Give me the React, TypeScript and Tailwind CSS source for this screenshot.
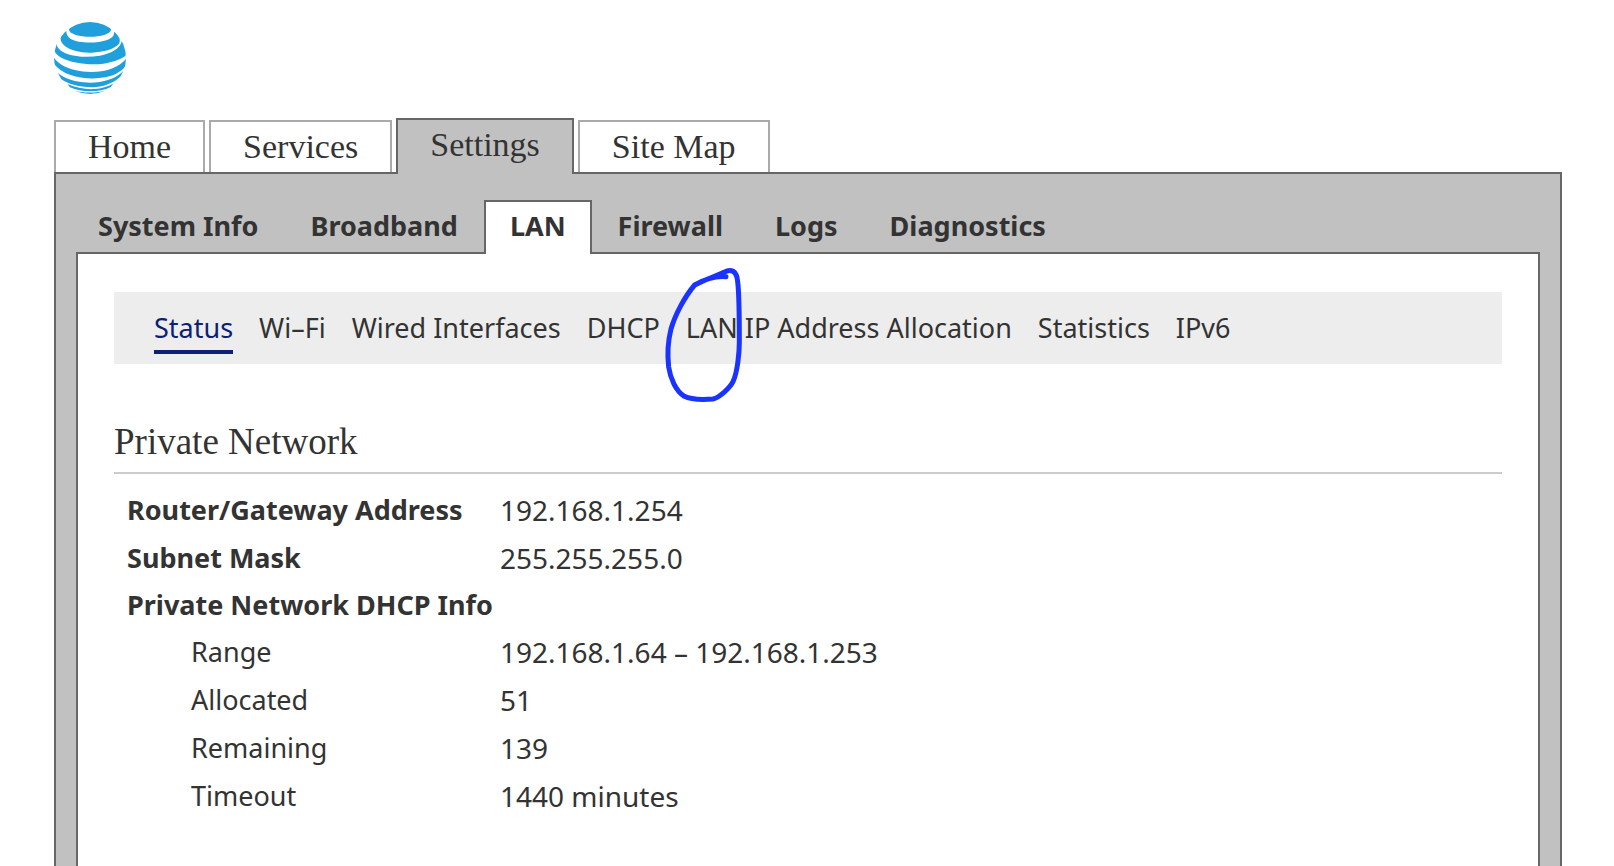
import React from "react";

type TabItem = { label: string; active?: boolean };

const mainTabs: TabItem[] = [
  { label: "Home" },
  { label: "Services" },
  { label: "Settings", active: true },
  { label: "Site Map" },
];

const sectionTabs: TabItem[] = [
  { label: "System Info" },
  { label: "Broadband" },
  { label: "LAN", active: true },
  { label: "Firewall" },
  { label: "Logs" },
  { label: "Diagnostics" },
];

const pageLinks: (TabItem & { marked?: boolean })[] = [
  { label: "Status", active: true },
  { label: "Wi–Fi" },
  { label: "Wired Interfaces" },
  { label: "DHCP" },
  { label: "LAN IP Address Allocation", marked: true },
  { label: "Statistics" },
  { label: "IPv6" },
];

type Row = { label: string; value?: string; kind: "main" | "group" | "sub" };

const rows: Row[] = [
  { label: "Router/Gateway Address", value: "192.168.1.254", kind: "main" },
  { label: "Subnet Mask", value: "255.255.255.0", kind: "main" },
  { label: "Private Network DHCP Info", kind: "group" },
  { label: "Range", value: "192.168.1.64 – 192.168.1.253", kind: "sub" },
  { label: "Allocated", value: "51", kind: "sub" },
  { label: "Remaining", value: "139", kind: "sub" },
  { label: "Timeout", value: "1440 minutes", kind: "sub" },
];

function Globe() {
  return (
    <svg className="size-[72px]" viewBox="42 36 216 216" role="img" aria-label="AT&T">
      <defs>
        <clipPath id="globe">
          <circle cx="150" cy="144" r="108" />
        </clipPath>
      </defs>
      <g clipPath="url(#globe)" fill="#1f9fdb">
        <path d="M87 59C89 44 120 32 150 32C181 32 211 45 213 59C212 72 181 80 150 80C119 80 88 72 87 59Z" />
        <path d="M79 61C57 77 58 93 72 106C90 122 122 129 155 128C190 127 222 118 236 103C244 92 238 76 222 65C225 80 209 90 180 95C150 100 112 98 92 87C82 80 78 71 79 61Z" />
        <path d="M50 98C49 112 60 124 82 132C108 141 145 143 180 137C212 131 240 117 245 94L262 108L260 134C250 145 225 156 190 161C145 166 95 159 64 143C52 136 46 130 42 120Z" />
        <path d="M40 140C50 158 72 172 104 180C140 189 184 187 214 176C236 168 252 156 262 142L258 167C248 180 230 192 208 199C170 209 125 207 92 195C66 186 48 171 40 157Z" />
        <path d="M53 188C68 202 95 213 130 217C175 222 222 211 250 183L242 199C226 216 200 228 168 231C130 234 88 225 64 208Z" />
        <path d="M82 222C108 233 138 239 164 237C184 235 203 230 220 221L212 231C195 240 174 244 150 244C128 244 108 240 90 232Z" />
        <path d="M103 242C130 249 170 249 197 242L190 254H110Z" />
      </g>
    </svg>
  );
}

function PenCircle() {
  return (
    <svg
      className="pointer-events-none absolute -top-[41px] -left-6 h-[140px] w-[84px]"
      viewBox="309 30 252 420"
      fill="none"
      stroke="#1b33ff"
      strokeLinecap="round"
      strokeLinejoin="round"
      aria-hidden="true"
    >
      <path
        strokeWidth="15"
        d="M501 65C470 62 435 74 407 90C377 125 348 180 336 222C326 262 326 310 329 336C334 370 350 408 376 424C396 434 436 434 462 432C480 428 512 400 522 380C536 350 541 290 541 262C541 200 541 120 536 80C533 46 516 40 494 52C470 64 440 72 412 88"
      />
    </svg>
  );
}

export default function App() {
  return (
    <div className="flex min-h-screen flex-col bg-white pr-[52px] pl-[54px] font-['Noto_Sans','Open_Sans',sans-serif] text-[27px] text-[#333333]">
      <header className="pt-[22px]">
        <a href="#home" className="block w-fit">
          <Globe />
        </a>
      </header>

      <nav aria-label="Main" className="mt-6 font-['Liberation_Serif',serif] text-[34px]">
        <ul className="flex items-end gap-1">
          {mainTabs.map((tab) => (
            <li key={tab.label}>
              <a
                href="#main"
                aria-current={tab.active ? "page" : undefined}
                className={
                  tab.active
                    ? "relative -mb-0.5 block h-14 border-2 border-b-0 border-[#666666] bg-[#c1c1c1] px-8 leading-[50px]"
                    : "block h-[52px] border-2 border-b-0 border-[#aaaaaa] px-8 leading-[50px]"
                }
              >
                {tab.label}
              </a>
            </li>
          ))}
        </ul>
      </nav>

      <div className="flex flex-1 flex-col border-2 border-b-0 border-[#666666] bg-[#c1c1c1] px-5 pt-[26px]">
        <nav aria-label="Settings" className="-ml-1 font-bold">
          <ul className="flex">
            {sectionTabs.map((tab) => (
              <li key={tab.label}>
                <a
                  href="#section"
                  aria-current={tab.active ? "page" : undefined}
                  className={
                    tab.active
                      ? "relative -mb-0.5 block h-[54px] border-2 border-b-0 border-[#666666] bg-white px-6 leading-[48px]"
                      : "block h-[52px] border-2 border-b-0 border-transparent px-6 leading-[48px]"
                  }
                >
                  {tab.label}
                </a>
              </li>
            ))}
          </ul>
        </nav>

        <main className="flex-1 border-2 border-b-0 border-[#666666] bg-white px-9 pt-[38px]">
          <nav aria-label="LAN" className="bg-[#ededed] px-10 pt-[14px] pb-[10px]">
            <ul className="flex gap-[26px] leading-[44px] whitespace-nowrap">
              {pageLinks.map((link) => (
                <li key={link.label} className="relative">
                  <a
                    href="#page"
                    aria-current={link.active ? "page" : undefined}
                    className={
                      link.active
                        ? "block border-b-4 border-[#0c2074] text-[#0c2074]"
                        : "block border-b-4 border-transparent"
                    }
                  >
                    {link.label}
                  </a>
                  {link.marked && <PenCircle />}
                </li>
              ))}
            </ul>
          </nav>

          <h1 className="mt-[58px] border-b-2 border-[#cccccc] pb-2.5 font-['Liberation_Serif',serif] text-[37px] leading-10">
            Private Network
          </h1>

          <table className="mt-3 text-left leading-[48px]">
            <tbody>
              {rows.map((row) =>
                row.kind === "group" ? (
                  <tr key={row.label}>
                    <th scope="rowgroup" colSpan={2} className="pl-[13px] leading-[46px] font-bold">
                      {row.label}
                    </th>
                  </tr>
                ) : (
                  <tr key={row.label}>
                    <th
                      scope="row"
                      className={
                        row.kind === "main"
                          ? "w-[386px] pl-[13px] font-bold"
                          : "w-[386px] pl-[77px] font-normal"
                      }
                    >
                      {row.label}
                    </th>
                    <td className="text-[28px]">{row.value}</td>
                  </tr>
                )
              )}
            </tbody>
          </table>
        </main>
      </div>
    </div>
  );
}
